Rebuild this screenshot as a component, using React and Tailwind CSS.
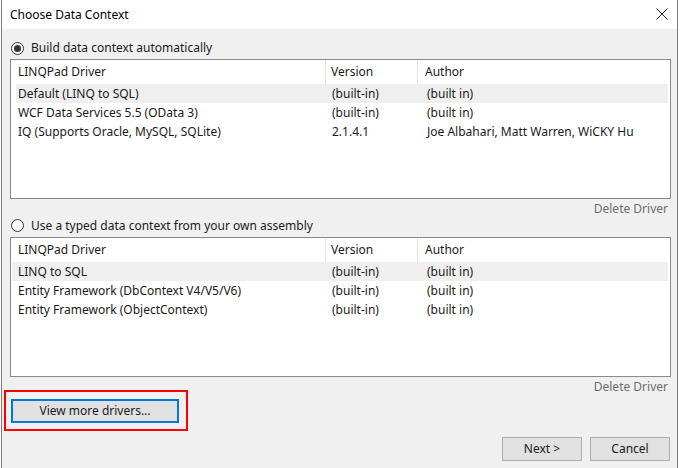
const builtIn = [
  { name: "Default (LINQ to SQL)", version: "(built-in)", author: "(built in)" },
  { name: "WCF Data Services 5.5 (OData 3)", version: "(built-in)", author: "(built in)" },
  { name: "IQ (Supports Oracle, MySQL, SQLite)", version: "2.1.4.1", author: "Joe Albahari, Matt Warren, WiCKY Hu" },
];

const typed = [
  { name: "LINQ to SQL", version: "(built-in)", author: "(built in)" },
  { name: "Entity Framework (DbContext V4/V5/V6)", version: "(built-in)", author: "(built in)" },
  { name: "Entity Framework (ObjectContext)", version: "(built-in)", author: "(built in)" },
];

function Radio({ checked, label }) {
  return (
    <div className="flex items-center gap-[7px]">
      <span className="flex h-[13px] w-[13px] items-center justify-center rounded-full border border-[#333] bg-white">
        {checked && <span className="h-[7px] w-[7px] rounded-full bg-[#333]" />}
      </span>
      <span>{label}</span>
    </div>
  );
}

function DriverList({ rows, selLeft }) {
  return (
    <div className="h-[140px] border border-[#8a8a8a] bg-white">
      <div className="flex h-[24px] items-center">
        <div className="w-[315px] border-r border-[#e5e5e5] pl-[7px] leading-[24px]">LINQPad Driver</div>
        <div className="w-[92px] border-r border-[#e5e5e5] pl-[5px] leading-[24px]">Version</div>
        <div className="flex-1 pl-[7px] leading-[24px]">Author</div>
      </div>
      {rows.map((r, i) => (
        <div key={r.name} className="relative flex h-[19px] items-center leading-[19px]">
          {i === 0 && <div className={`absolute inset-y-0 right-[2px] bg-[#efefef] ${selLeft}`} />}
          <div className="relative w-[316px] pl-[7px]">{r.name}</div>
          <div className="relative w-[93px] pl-[5px]">{r.version}</div>
          <div className="relative flex-1 whitespace-nowrap pl-[7px]">{r.author}</div>
        </div>
      ))}
    </div>
  );
}

function Btn({ children, className = "" }) {
  return (
    <button className={`h-[24px] border border-[#adadad] bg-[#e1e1e1] text-[12px] text-[#1a1a1a] ${className}`}>{children}</button>
  );
}

export default function App() {
  return (
    <div className="h-[468px] w-[680px] bg-white text-[12px] text-[#1a1a1a]" style={{ fontFamily: '"Noto Sans", sans-serif' }}>
      <div className="ml-[1px] flex h-full w-[677px] flex-col border-x border-[#7a7a7a]">
        <div className="flex h-[29px] items-center justify-between bg-white pl-[8px] pr-[9px]">
          <span className="text-[#000]">Choose Data Context</span>
          <svg width="12" height="12" viewBox="0 0 12 12" className="mb-[1px]">
            <path d="M0.5 0.5 L11.5 11.5 M11.5 0.5 L0.5 11.5" stroke="#222" strokeWidth="1" />
          </svg>
        </div>
        <div className="flex flex-1 flex-col bg-[#f0f0f0] pl-[8px] pr-[6px] pt-[8px]">
          <div className="flex h-[22px] items-center pl-[1px]">
            <Radio checked label="Build data context automatically" />
          </div>
          <DriverList rows={builtIn} selLeft="left-[5px]" />
          <div className="h-[15px] pr-[3px] text-right leading-[19px] text-[#6d6d6d]">Delete Driver</div>
          <div className="flex h-[23px] items-center pl-[1px]">
            <Radio label="Use a typed data context from your own assembly" />
          </div>
          <DriverList rows={typed} selLeft="left-[1px]" />
          <div className="h-[21px] pr-[3px] text-right leading-[19px] text-[#6d6d6d]">Delete Driver</div>
          <div className="mt-[1px] pl-[1px]">
            <div className="relative w-[168px]">
              <button className="h-[24px] w-[168px] border-2 border-[#0078d7] bg-[#e1e1e1] text-[12px] text-[#1a1a1a]">View more drivers...</button>
              <div className="absolute left-[-7px] top-[-9px] h-[41px] w-[184px] border-2 border-[#ff0000]" />
            </div>
          </div>
          <div className="mt-[14px] flex justify-end gap-[8px] pr-[1px]">
            <Btn className="w-[80px]">Next &gt;</Btn>
            <Btn className="w-[80px]">Cancel</Btn>
          </div>
        </div>
      </div>
    </div>
  );
}
